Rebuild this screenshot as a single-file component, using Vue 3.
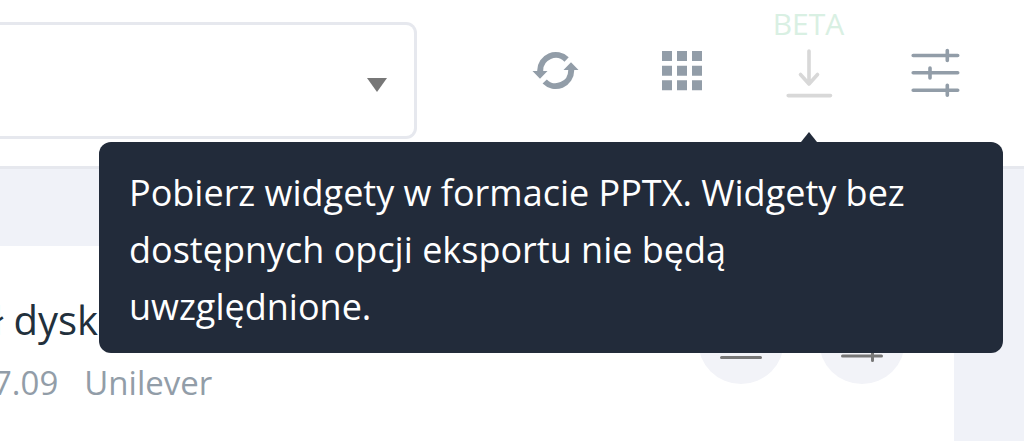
<script setup>
import { ref } from 'vue'

const tip = 'Pobierz widgety w formacie PPTX. Widgety bez dostępnych opcji eksportu nie będą uwzględnione.'
const selected = ref('')
</script>

<template>
  <div class="page">
    <header class="topbar">
      <div class="picker">
        <select v-model="selected" aria-label="Projekt">
          <option value=""></option>
        </select>
        <svg class="caret" width="20" height="14" viewBox="0 0 20 14" aria-hidden="true"><path d="M0 0H20L10 14Z" /></svg>
      </div>
      <nav class="tools">
        <button type="button" class="tool" aria-label="Odśwież">
          <svg width="48" height="48" viewBox="0 0 48 48" aria-hidden="true">
            <path class="arc" d="M9.200 25V23.500A15.500 15.500 0 0 1 35.600 12.500M40.200 22V23.500A15.500 15.500 0 0 1 13.700 34.500" />
            <path class="solid" d="M1.500 24H16.500L9 31.700ZM32.500 23H47.500L40 15.300Z" />
          </svg>
        </button>
        <button type="button" class="tool" aria-label="Siatka">
          <svg width="48" height="48" viewBox="0 0 48 48" aria-hidden="true">
            <path class="solid" d="M4 4h10v10h-10zM19 4h10v10h-10zM34 4h10v10h-10zM4 18.700h10v10h-10zM19 18.700h10v10h-10zM34 18.700h10v10h-10zM4 33.300h10v10h-10zM19 33.300h10v10h-10zM34 33.300h10v10h-10z" />
          </svg>
        </button>
        <div class="download">
          <button type="button" class="tool faded" aria-describedby="export-tip" aria-label="Pobierz">
            <span class="beta">BETA</span>
            <svg width="48" height="54" viewBox="0 0 48 54" aria-hidden="true">
              <path class="line" d="M24 7V40M15.500 30.500L24 40L32.500 30.500M3.200 51.600H45.500" />
            </svg>
          </button>
          <div id="export-tip" class="tooltip" role="tooltip">{{ tip }}</div>
        </div>
        <button type="button" class="tool" aria-label="Filtry">
          <svg width="50" height="54" viewBox="0 0 50 54" aria-hidden="true">
            <path class="line" d="M2.200 11.500H46.700M2.200 28.800H46.700M2.200 46.200H46.700M36.300 6.500V16.500M19 24V34M36.300 41.200V51.200" />
          </svg>
        </button>
      </nav>
    </header>
    <main class="content">
      <section class="card">
        <div class="heading">
          <h2>ł dysku</h2>
          <p><span>7.09</span><span>Unilever</span></p>
        </div>
        <div class="actions">
          <button type="button" class="round" aria-label="Pobierz widget">
            <svg width="44" height="44" viewBox="0 0 44 44" aria-hidden="true">
              <path class="line" d="M22 3V29M14 21L22 29L30 21M2.500 38.500H41.500" />
            </svg>
          </button>
          <button type="button" class="round" aria-label="Ustawienia widgetu">
            <svg width="44" height="44" viewBox="0 0 44 44" aria-hidden="true">
              <path class="line" d="M2.500 7H41.500M2.500 22H41.500M2.500 37H41.500M32.500 2V12M17 17V27M32.500 32V41.500" />
            </svg>
          </button>
        </div>
      </section>
    </main>
  </div>
</template>

<style>
body {
  margin: 0;
  background: #f0f2f8;
}
</style>

<style scoped>
.page {
  display: flex;
  flex-direction: column;
  min-height: 100vh;
  overflow: hidden;
  font-family: "Open Sans", "Noto Sans", sans-serif;
}
.topbar {
  display: flex;
  justify-content: space-between;
  gap: 74px;
  padding: 22px 25px 27px 0;
  background: #fff;
  border-bottom: 3px solid #e6e8ee;
}
.picker {
  position: relative;
  flex: 1;
  display: flex;
}
.picker select {
  appearance: none;
  width: 100%;
  height: 117px;
  padding: 0 60px 0 24px;
  background: #fff;
  border: 3px solid #e6e8ee;
  border-left: 0;
  border-radius: 0 11px 11px 0;
  font: inherit;
}
.caret {
  position: absolute;
  right: 30px;
  top: 56px;
  fill: #777;
  pointer-events: none;
}
.tools {
  display: flex;
}
.tool {
  position: relative;
  display: flex;
  justify-content: center;
  align-items: center;
  width: 127px;
  height: 98px;
  padding: 0;
  border: 0;
  background: none;
  font: inherit;
  color: #929da8;
}
.line,
.arc {
  fill: none;
  stroke: currentColor;
  stroke-width: 3.6;
  stroke-linecap: round;
  stroke-linejoin: round;
}
.arc {
  stroke-width: 6;
  stroke-linecap: butt;
}
.solid {
  fill: currentColor;
}
.faded {
  color: #d8d8d8;
}
.download {
  position: relative;
}
.beta {
  position: absolute;
  top: -18px;
  left: 0;
  width: 100%;
  text-align: center;
  font-size: 30px;
  line-height: 40px;
  color: #d9f0e3;
}
.tooltip {
  position: absolute;
  z-index: 2;
  top: 120px;
  right: -131px;
  box-sizing: border-box;
  width: 904px;
  padding: 22px 30px 18px;
  border-radius: 12px;
  background: #222b3a;
  color: #fff;
  font-size: 36px;
  line-height: 57px;
}
.tooltip::before {
  content: "";
  position: absolute;
  right: 186px;
  bottom: 100%;
  border: 8px solid transparent;
  border-top: 0;
  border-bottom: 10px solid #222b3a;
}
.content {
  flex: 1;
  display: flex;
  padding: 77px 70px 0 0;
  background: #f0f2f8;
}
.card {
  flex: 1;
  display: flex;
  justify-content: space-between;
  align-items: flex-start;
  padding: 46px 49px 0 0;
  background: #fff;
}
.heading {
  margin-left: -7px;
  white-space: nowrap;
}
h2 {
  margin: 0;
  font-size: 40px;
  font-weight: 400;
  line-height: 56px;
  color: #22303c;
}
p {
  display: flex;
  gap: 26px;
  margin: 11px 0 0;
  font-size: 33px;
  line-height: 48px;
  color: #929da8;
}
.actions {
  display: flex;
  gap: 35px;
  padding-top: 6px;
}
.round {
  display: flex;
  justify-content: center;
  align-items: center;
  width: 86px;
  height: 86px;
  padding: 0;
  border: 0;
  border-radius: 50%;
  background: #f2f3f8;
  color: #777;
}
.round .line {
  stroke-width: 3;
}
</style>
